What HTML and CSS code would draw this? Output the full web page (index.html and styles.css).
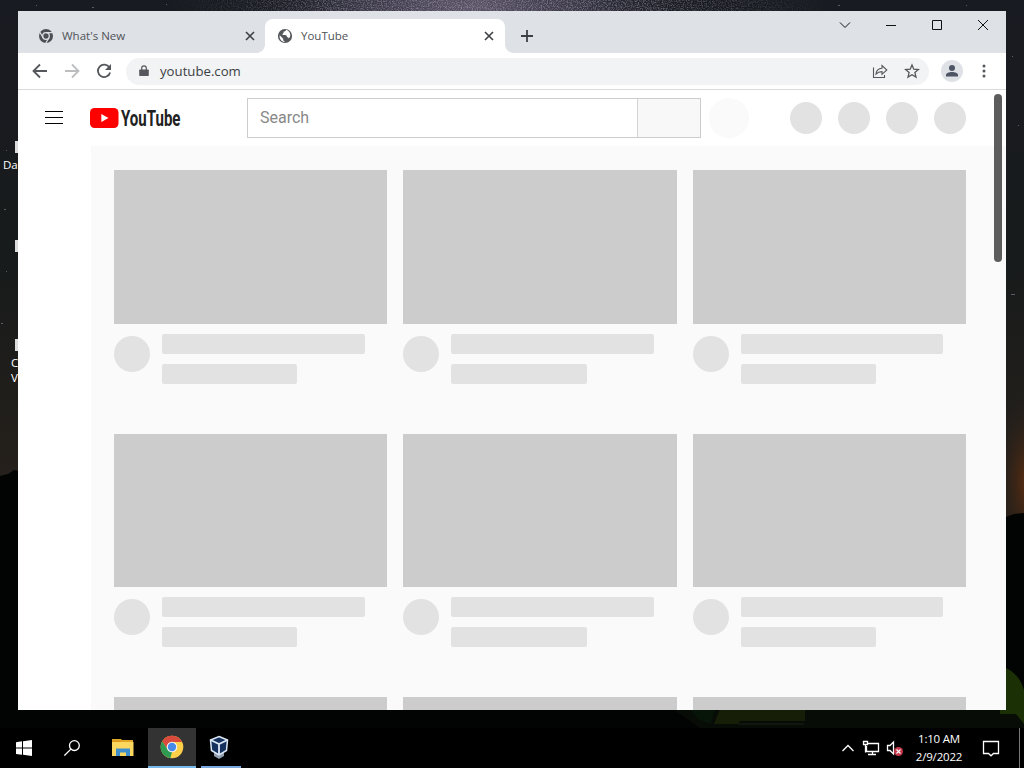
FILE: index.html
```html
<!DOCTYPE html>
<html lang="en">
<head>
    <meta charset="UTF-8">
    <meta name="viewport" content="width=device-width, initial-scale=1.0">
    <title>YouTube</title>
    <link rel="stylesheet" href="styles.css">
</head>
<body>
    <div class="desktop">
        <svg class="wallpaper" viewBox="0 0 1024 768" aria-hidden="true">
            <defs>
                <linearGradient id="sky" x1="0" y1="0" x2="0" y2="1">
                    <stop offset="0" stop-color="#191b22"/>
                    <stop offset="0.35" stop-color="#181b1b"/>
                    <stop offset="0.62" stop-color="#25201b"/>
                </linearGradient>
                <radialGradient id="milky">
                    <stop offset="0" stop-color="#5c5468"/>
                    <stop offset="0.5" stop-color="#353342"/>
                    <stop offset="1" stop-color="#191b22" stop-opacity="0"/>
                </radialGradient>
                <radialGradient id="glow">
                    <stop offset="0" stop-color="#5a2c10"/>
                    <stop offset="1" stop-color="#25201b" stop-opacity="0"/>
                </radialGradient>
                <filter id="grain" x="0" y="0" width="1" height="1">
                    <feTurbulence type="fractalNoise" baseFrequency="0.8" numOctaves="2" seed="4"/>
                    <feColorMatrix values="0 0 0 0 0.5  0 0 0 0 0.48  0 0 0 0 0.56  1.2 0 0 0 -0.5"/>
                    <feComposite in2="SourceGraphic" operator="in"/>
                </filter>
            </defs>
            <rect width="1024" height="768" fill="url(#sky)"/>
            <ellipse cx="470" cy="6" rx="240" ry="60" fill="url(#milky)"/>
            <ellipse cx="500" cy="6" rx="330" ry="60" fill="url(#milky)" filter="url(#grain)"/>
            <ellipse cx="1026" cy="482" rx="30" ry="90" fill="url(#glow)"/>
            <path d="M0 476l8-2 6-4 10 2 976 44 6 1 8-3 10-1v255H0z" fill="#020303"/>
            <path d="M660 700h364v28H700z" fill="#080c06"/>
            <path d="M720 709h85v12h-65l-2 3h-24z" fill="#161e08"/>
            <path d="M690 709h25l-4 15-12-4z" fill="#071408"/>
            <path d="M1000 666c12 3 20 11 24 24v34l-8-10h-16z" fill="#1c3006"/>
            <path d="M738 724h66" stroke="#1d2019"/>
            <path d="M36 5h1v1h-1zM92 7h2v1h-2zM166 4h1v1h-1zM838 5h2v1h-2zM966 5h1v1h-1zM1012 56h1v1h-1zM1018 125h1v1h-1zM1011 294h4v1h-4zM6 150h1v1H6zM4 209h2v1H4zM6 271h1v1H6zM1 323h2v1H1z" fill="#5b5c68"/>
        </svg>

        <div class="desktop-icon icon-data"><i></i>Da</div>
        <div class="desktop-icon icon-blank"><i></i></div>
        <div class="desktop-icon icon-oracle"><i></i>C<br>V</div>

        <div class="browser">
            <div class="tab-strip">
                <div class="tab">
                    <svg class="favicon" viewBox="0 0 16 16"><circle cx="8" cy="8" r="7" fill="#4c4f54"/><circle cx="8" cy="8" r="3.3" fill="#4c4f54" stroke="#dee1e6" stroke-width="1.3"/><path d="M8 4.7h6.5M5.1 9.7L1.9 4.2M10.9 9.7l-3.2 5.6" stroke="#dee1e6" stroke-width="1.2"/></svg>
                    <span class="tab-title">What's New</span>
                    <svg class="tab-close" viewBox="0 0 10 10"><path d="M1 1l8 8M9 1L1 9"/></svg>
                </div>
                <div class="tab active">
                    <svg class="favicon" viewBox="0 0 16 16"><circle cx="8" cy="8" r="7.1" fill="#54575b"/><path d="M9.2 1.8c-.2 1.4-1.4 1.6-2.5 1.8-.3 1 .3 1.3-.7 1.9-.7.4-.8 1.6.2 1.6h2.2c1.2 0 1.6 1 1.5 2 1.3.1 1.7.6 1.8 1.5 1-.9 1.6-2.1 1.6-3.5 0-2.4-1.7-4.6-4.1-5.3zM2.7 7.2l3.5 3.5v1c0 .7.6 1.3 1.3 1.3v1C4.6 13.6 2 10.8 2.7 7.2z" fill="#fff"/></svg>
                    <span class="tab-title">YouTube</span>
                    <svg class="tab-close" viewBox="0 0 10 10"><path d="M1 1l8 8M9 1L1 9"/></svg>
                </div>
                <svg class="new-tab" viewBox="0 0 12 12"><path d="M6 0v12M0 6h12"/></svg>
                <div class="window-controls">
                    <svg viewBox="0 0 12 12"><path d="M1 3.5l5 5 5-5"/></svg>
                    <svg viewBox="0 0 12 12"><path d="M1 6.5h10"/></svg>
                    <svg viewBox="0 0 12 12"><path d="M1.5 1.5h9v9h-9z"/></svg>
                    <svg viewBox="0 0 12 12"><path d="M1 1l10 10M11 1L1 11"/></svg>
                </div>
            </div>

            <div class="toolbar">
                <svg class="nav-icon" viewBox="0 0 16 16"><path d="M15 8H2M8 1.5L1.5 8 8 14.5"/></svg>
                <svg class="nav-icon disabled" viewBox="0 0 16 16"><path d="M1 8h13M8 1.5L14.5 8 8 14.5"/></svg>
                <svg class="nav-icon" viewBox="0 0 16 16"><path d="M13.4 4.6A6.2 6.2 0 1 0 14.1 9.4"/><path d="M15 1v6H9z" fill="#54575b" stroke="none"/></svg>
                <div class="omnibox">
                    <svg class="lock" viewBox="0 0 10 12"><path d="M1 4.5h8q.8 0 .8.8v5q0 .8-.8.8H1q-.8 0-.8-.8v-5q0-.8.8-.8z" fill="#54575b"/><path d="M2.7 5V3.2a2.3 2.3 0 0 1 4.6 0V5" fill="none" stroke="#54575b" stroke-width="1.2"/></svg>
                    <span class="url">youtube.com</span>
                    <svg class="action share" viewBox="0 0 16 16"><path d="M1.5 4.5v10h11v-2.5M4 11c.4-3.7 2.5-5.5 6-5.7V2.5L14.8 7 10 11.3V8.6c-2.7 0-4.4.7-6 2.4z"/></svg>
                    <svg class="action" viewBox="0 0 16 16"><path d="M8 2l1.8 4.2 4.6.4-3.5 3 1.1 4.5L8 11.7l-4 2.4 1.1-4.5-3.5-3 4.6-.4z"/></svg>
                </div>
                <div class="profile">
                    <svg viewBox="0 0 14 14"><circle cx="7" cy="4" r="3" fill="#4d5565"/><path d="M1 12.5V11c0-2 3-3 6-3s6 1 6 3v1.5z" fill="#4d5565"/></svg>
                </div>
                <svg class="menu-dots" viewBox="0 0 4 14"><circle cx="2" cy="2" r="1.5"/><circle cx="2" cy="7" r="1.5"/><circle cx="2" cy="12" r="1.5"/></svg>
            </div>

            <div class="page">
                <header class="masthead">
                    <div class="hamburger"><i></i><i></i><i></i></div>
                    <svg class="logo" viewBox="0 0 92 24">
                        <rect x="0" y="2" width="28.5" height="20" rx="4.5" fill="#f00"/>
                        <path d="M11.3 8v8l7.2-4z" fill="#fff"/>
                        <text x="31" y="20" textLength="59.5" lengthAdjust="spacingAndGlyphs">YouTube</text>
                    </svg>
                    <div class="search">
                        <div class="search-input">Search</div>
                        <div class="search-button"></div>
                    </div>
                    <div class="mic"></div>
                    <div class="header-icons"><i></i><i></i><i></i><i></i></div>
                </header>
                <main class="content">
                    <div class="card">
                        <div class="thumb"></div>
                        <div class="details"><div class="avatar"></div><div class="lines"><div class="line"></div><div class="line short"></div></div></div>
                    </div>
                    <div class="card">
                        <div class="thumb"></div>
                        <div class="details"><div class="avatar"></div><div class="lines"><div class="line"></div><div class="line short"></div></div></div>
                    </div>
                    <div class="card">
                        <div class="thumb"></div>
                        <div class="details"><div class="avatar"></div><div class="lines"><div class="line"></div><div class="line short"></div></div></div>
                    </div>
                    <div class="card">
                        <div class="thumb"></div>
                        <div class="details"><div class="avatar"></div><div class="lines"><div class="line"></div><div class="line short"></div></div></div>
                    </div>
                    <div class="card">
                        <div class="thumb"></div>
                        <div class="details"><div class="avatar"></div><div class="lines"><div class="line"></div><div class="line short"></div></div></div>
                    </div>
                    <div class="card">
                        <div class="thumb"></div>
                        <div class="details"><div class="avatar"></div><div class="lines"><div class="line"></div><div class="line short"></div></div></div>
                    </div>
                    <div class="card"><div class="thumb"></div></div>
                    <div class="card"><div class="thumb"></div></div>
                    <div class="card"><div class="thumb"></div></div>
                </main>
                <div class="scrollbar"></div>
            </div>
        </div>

        <div class="taskbar">
            <div class="task">
                <svg width="16" height="16" viewBox="0 0 16 16"><path d="M0 2.2l6-.9v6.3H0zM7 1.2L16 0v7.6H7zM0 8.5h6v6.3l-6-.9zM7 8.5h9V16l-9-1.2z" fill="#fff"/></svg>
            </div>
            <div class="task">
                <svg width="16" height="16" viewBox="0 0 16 16" fill="none" stroke="#fff" stroke-width="1.3"><circle cx="10.4" cy="5.6" r="4.9"/><path d="M6.9 9.1L.4 15.6"/></svg>
            </div>
            <div class="task explorer">
                <svg width="22" height="20" viewBox="0 0 22 20"><path d="M0 1h9l1 1h11v16H0z" fill="#e3a526"/><path d="M0 4h21.5v14H0z" fill="#fbd75f"/><path d="M0 4h8l1.5-1.5H0z" fill="#d9981c"/><path d="M4 10.5h14V18h-4v-3.5H8V18H4z" fill="#3f8fce"/></svg>
            </div>
            <div class="task running focused">
                <svg width="24" height="24" viewBox="0 0 24 24"><circle cx="12" cy="12" r="11.3" fill="#fbcf47"/><path d="M2.2 6.3A11.3 11.3 0 0 1 22 7H12L7.5 14.5z" fill="#d94a3d"/><path d="M2.2 6.3L7.6 14.6 12 17l-1.7 6.2A11.3 11.3 0 0 1 2.2 6.3z" fill="#2f9a51"/><circle cx="12" cy="12" r="5.3" fill="#f5f5f5"/><circle cx="12" cy="12" r="4.2" fill="#4689e8"/></svg>
            </div>
            <div class="task running virtualbox">
                <svg width="22" height="24" viewBox="0 0 22 24"><path d="M6 16h10v5l-5 3-5-3z" fill="#93a0b0"/><path d="M11 1.5l8.5 3.5-1 10.5L11 20l-7.5-4.5-1-10.5z" fill="#15325e" stroke="#dce8f5" stroke-width="1.5"/><path d="M2.5 5L11 9l8.5-4M11 9v11" fill="none" stroke="#dce8f5" stroke-width="1.8"/></svg>
            </div>
            <div class="tray">
                <svg width="14" height="10" viewBox="0 0 14 10"><path d="M1.5 8L7 2.5 12.5 8"/></svg>
                <svg width="18" height="16" viewBox="0 0 18 16"><path d="M6 3.5h10.500v8H4.500V6M1.500 1.500h4v3h-4zM3.500 4.500v8M10.500 11.500v3M6 14.500h8"/></svg>
                <svg width="18" height="16" viewBox="0 0 18 16"><path d="M1.5 5.500H4L7.500 2v12L4 10.500H1.500z"/><circle cx="12.5" cy="11.5" r="4.5" fill="#c6384a" stroke="none"/><path d="M10.500 9.500l4 4M14.500 9.500l-4 4" stroke-width="1.1"/></svg>
                <div class="clock">1:10 AM<br>2/9/2022</div>
                <svg width="18" height="18" viewBox="0 0 18 18"><path d="M1.500 2.500h15v12h-5L9 16.800l-2.500-2.300h-5z"/></svg>
            </div>
        </div>
    </div>
</body>
</html>
```

FILE: styles.css
```css
* {
    box-sizing: border-box;
}

body {
    margin: 0;
    font-family: "Open Sans", "Noto Sans", sans-serif;
    font-size: 12px;
}

svg {
    display: block;
    flex: none;
}

.desktop {
    position: relative;
    width: 1024px;
    height: 768px;
    padding: 11px 18px 0;
    overflow: hidden;
    background: #000;
}

.wallpaper {
    position: absolute;
    left: 0;
    top: 0;
    width: 1024px;
    height: 768px;
}

/* Desktop icons, mostly hidden by the window */
.desktop-icon {
    position: absolute;
    width: 30px;
    color: #fff;
    font-size: 11.5px;
    line-height: 15px;
}

.desktop-icon i {
    display: block;
    width: 4px;
    height: 12px;
    margin-bottom: 4px;
    background: #ddd;
}

.icon-data {
    left: 3px;
    top: 141px;
}

.icon-data i {
    margin-left: 12px;
}

.icon-blank {
    left: 15px;
    top: 240px;
}

.icon-oracle {
    left: 11px;
    top: 339px;
}

.icon-oracle i {
    margin-left: 4px;
}

/* Browser window */
.browser {
    position: relative;
    display: flex;
    flex-direction: column;
    width: 988px;
    height: 699px;
    background: #fff;
    overflow: hidden;
}

.tab-strip {
    display: flex;
    align-items: flex-start;
    height: 42px;
    padding-left: 7px;
    background: #dee1e6;
}

.tab {
    position: relative;
    display: flex;
    align-items: center;
    width: 240px;
    height: 34px;
    margin-top: 8px;
    padding: 0 10px 0 13px;
    border-radius: 8px 8px 0 0;
    color: #505358;
}

.tab.active {
    padding: 0 11px 0 12px;
    background: #fff;
}

/* Curved feet of the active tab */
.tab.active::before,
.tab.active::after {
    content: "";
    position: absolute;
    bottom: 0;
    width: 8px;
    height: 8px;
}

.tab.active::before {
    left: -8px;
    background: radial-gradient(circle at 0 0, #dee1e6 7.5px, #fff 8px);
}

.tab.active::after {
    right: -8px;
    background: radial-gradient(circle at 100% 0, #dee1e6 7.5px, #fff 8px);
}

.favicon {
    width: 16px;
    height: 16px;
}

.tab-title {
    flex: 1;
    margin-left: 8px;
    padding-bottom: 1px;
    font-size: 11.5px;
}

.tab-close {
    width: 10px;
    height: 10px;
    stroke: #3c4043;
    stroke-width: 1.6;
}

.new-tab {
    width: 12px;
    height: 12px;
    margin: 19px 0 0 16px;
    stroke: #3c4043;
    stroke-width: 1.8;
}

.window-controls {
    display: flex;
    gap: 34px;
    margin: 8px 17px 0 auto;
}

.window-controls svg {
    width: 12px;
    height: 12px;
    fill: none;
    stroke: #111;
}

.toolbar {
    display: flex;
    align-items: center;
    height: 37px;
    padding-left: 14px;
    border-bottom: 1px solid #d9dadc;
}

.nav-icon {
    width: 16px;
    height: 16px;
    margin-right: 16px;
    fill: none;
    stroke: #54575b;
    stroke-width: 1.8;
}

.nav-icon.disabled {
    stroke: #bcbdbf;
}

.omnibox {
    display: flex;
    align-items: center;
    width: 803px;
    height: 27px;
    margin-left: -2px;
    padding: 0 9px 0 13px;
    border-radius: 14px;
    background: #f1f3f4;
}

.lock {
    width: 10px;
    height: 12px;
}

.url {
    flex: 1;
    margin-left: 11px;
    color: #3c3f44;
    font-size: 13.2px;
}

.action {
    width: 16px;
    height: 16px;
    margin-left: 16px;
    fill: none;
    stroke: #54575b;
    stroke-width: 1.3;
}

.action.share {
    stroke-width: 1.1;
}

.profile {
    display: flex;
    align-items: center;
    justify-content: center;
    width: 22px;
    height: 22px;
    margin-left: 12px;
    border-radius: 50%;
    background: #dee1e6;
}

.profile svg {
    width: 14px;
    height: 14px;
}

.menu-dots {
    width: 4px;
    height: 14px;
    margin-left: 19px;
    fill: #54575b;
}

/* YouTube page */
.page {
    position: relative;
    flex: 1;
    min-height: 0;
    overflow: hidden;
}

.masthead {
    display: flex;
    align-items: center;
    height: 56px;
    padding-left: 27px;
}

.hamburger {
    display: flex;
    flex-direction: column;
    gap: 5px;
    width: 18px;
    margin-bottom: 1px;
}

.hamburger i {
    height: 1px;
    background: #030303;
}

.logo {
    width: 92px;
    height: 24px;
    margin-left: 27px;
    overflow: visible;
}

.logo text {
    fill: #212121;
    font-family: Roboto, sans-serif;
    font-size: 22.5px;
    font-weight: 700;
}

.search {
    display: flex;
    width: 454px;
    height: 40px;
    margin-left: 65px;
    border: 1px solid #ccc;
}

.search-input {
    width: 389px;
    padding-left: 12px;
    color: #888;
    font: 16px/37px Roboto, sans-serif;
}

.search-button {
    flex: 1;
    border-left: 1px solid #d3d3d3;
    background: #f8f8f8;
}

.mic {
    width: 40px;
    height: 40px;
    margin-left: 8px;
    border-radius: 50%;
    background: #fafafa;
}

.header-icons {
    display: flex;
    gap: 16px;
    margin-left: 41px;
}

.header-icons i {
    width: 32px;
    height: 32px;
    border-radius: 50%;
    background: #e2e2e2;
}

.content {
    display: grid;
    grid-template-columns: repeat(3, 1fr);
    grid-auto-rows: 263.5px;
    column-gap: 16px;
    margin-left: 73px;
    padding: 24px 40px 0 23px;
    background: #fafafa;
}

.thumb {
    height: 153.6px;
    background: #ccc;
}

.details {
    display: flex;
    padding-top: 10px;
}

.avatar {
    width: 36px;
    height: 36px;
    margin: 2px 12px 0 0;
    border-radius: 50%;
    background: #e2e2e2;
}

.lines {
    width: 225.3px;
}

.line {
    width: 90%;
    height: 20px;
    margin-bottom: 10px;
    border-radius: 2px;
    background: #e2e2e2;
}

.line.short {
    width: 60%;
}

.scrollbar {
    position: absolute;
    top: 4px;
    right: 4px;
    width: 8px;
    height: 168px;
    border-radius: 4px;
    background: #5c5c5c;
}

/* Windows taskbar */
.taskbar {
    position: relative;
    display: flex;
    align-items: flex-start;
    height: 40px;
    margin: 18px -18px 0;
    background: #000;
}

.task {
    display: flex;
    align-items: center;
    justify-content: center;
    width: 48px;
    height: 40px;
}

.task.explorer {
    padding-left: 5px;
}

.task.running {
    width: 40px;
    margin-left: 5px;
    border-bottom: 2px solid #7aa9e0;
}

.task.focused {
    width: 48px;
    margin-left: 4px;
    background: #333;
    border-bottom-color: #76b9ed;
}

.task.virtualbox {
    padding-right: 4px;
}

.tray {
    display: flex;
    align-items: center;
    height: 40px;
    margin-left: auto;
    margin-right: 4px;
    padding-right: 19px;
    border-right: 1px solid #777;
}

.tray svg {
    margin-right: 6px;
    fill: none;
    stroke: #fff;
    stroke-width: 1.3;
}

.tray svg:first-child {
    margin-right: 7px;
}

.tray svg:last-child {
    margin-right: 0;
}

.clock {
    width: 56px;
    margin: 0 15px 0 1px;
    color: #fff;
    font-size: 11.5px;
    line-height: 18px;
    text-align: center;
    letter-spacing: -0.2px;
    white-space: nowrap;
}
```
